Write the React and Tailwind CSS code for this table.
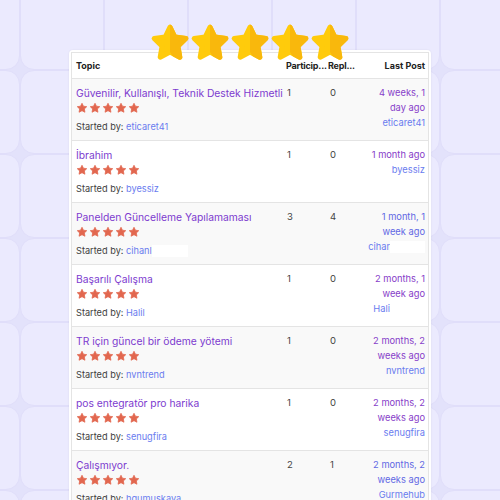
import React from "react";

const rows = [
  { title: "Güvenilir, Kullanışlı, Teknik Destek Hizmetli", by: "eticaret41", p: "1", r: "0", date: ["4 weeks, 1", "day ago"], dateBlue: false, last: "eticaret41" },
  { title: "İbrahim", titleRed: true, by: "byessiz", p: "1", r: "0", date: ["1 month ago"], dateBlue: false, last: "byessiz" },
  { title: "Panelden Güncelleme Yapılamaması", by: "cihanl", byRed: true, p: "3", r: "4", date: ["1 month, 1", "week ago"], dateBlue: true, last: "cihar", lastRed: true },
  { title: "Başarılı Çalışma", by: "Halil", byRed: true, p: "1", r: "0", date: ["2 months, 1", "week ago"], dateBlue: false, last: "Hali", lastRed: true },
  { title: "TR için güncel bir ödeme yötemi", by: "nvntrend", p: "1", r: "0", date: ["2 months, 2", "weeks ago"], dateBlue: false, last: "nvntrend" },
  { title: "pos entegratör pro harika", by: "senugfira", p: "1", r: "0", date: ["2 months, 2", "weeks ago"], dateBlue: false, last: "senugfira" },
  { title: "Çalışmıyor.", by: "hgumuskaya", p: "2", r: "1", date: ["2 months, 2", "weeks ago"], dateBlue: true, last: "Gurmehub" },
];

const STAR = "12,2.5 14.9,8.4 21.5,9.3 16.75,13.9 17.9,20.5 12,17.4 6.1,20.5 7.25,13.9 2.5,9.3 9.1,8.4";

function SmallStar() {
  return (
    <svg width="12" height="12" viewBox="0 0 24 24" className="block">
      <polygon points={STAR} fill="#e2674f" stroke="#e2674f" strokeWidth="1.5" strokeLinejoin="round" />
    </svg>
  );
}

function GoldStar({ id }) {
  return (
    <svg width="40" height="40" viewBox="0 0 24 24" className="block">
      <defs>
        <clipPath id={id}>
          <polygon points="12,0 24,0 24,24 16,24 12,17.4" />
        </clipPath>
      </defs>
      <polygon points={STAR} fill="#ffcb0b" stroke="#ffcb0b" strokeWidth="3" strokeLinejoin="round" />
      <polygon points={STAR} fill="#f9b80c" stroke="#f9b80c" strokeWidth="3" strokeLinejoin="round" clipPath={`url(#${id})`} />
    </svg>
  );
}

export default function App() {
  const cells = Array.from({ length: 56 });
  return (
    <div className="relative w-[500px] h-[500px] overflow-hidden bg-[#e3e2fb] font-['Inter',sans-serif]">
      <div className="absolute inset-0 overflow-hidden">
        <div className="grid grid-cols-[repeat(8,84px)] -ml-[64px] -mt-[14px]">
          {cells.map((_, i) => (
            <div key={i} className="w-[84px] h-[84px] rounded-[14px] border border-[#e0defa] bg-[#ebeafe]" />
          ))}
        </div>
      </div>

      <div className="relative ml-[69px] mt-[50px] w-[362px] bg-white rounded-[4px] p-[2px] shadow-[0_0_2px_rgba(0,0,0,0.08)]">
        <div className="border border-[#e4e4e4] border-b-0">
          <div className="grid grid-cols-[213px_43px_28px_1fr] h-[26px] items-center border-b border-[#e4e4e4] bg-white text-[9px] font-bold text-[#222]">
            <div className="pl-[4px]">Topic</div>
            <div className="pl-[1px] overflow-hidden whitespace-nowrap tracking-[-0.2px]">Particip...</div>
            <div className="overflow-hidden whitespace-nowrap tracking-[-0.2px]">Repl...</div>
            <div className="text-right pr-[3px]">Last Post</div>
          </div>
          {rows.map((row, i) => (
            <div
              key={i}
              className={`grid grid-cols-[213px_43px_28px_1fr] h-[62px] pt-[6px] border-b border-[#e4e4e4] ${i % 2 === 0 ? "bg-[#f9f9f9]" : "bg-white"}`}
            >
              <div className="pl-[4px] pt-[1px]">
                <div className="flex items-center whitespace-nowrap text-[10.3px] leading-[14px] text-[#7d3bcf]">
                  <span>{row.title}</span>
                  {row.titleRed && <span className="ml-[3px] inline-block w-[40px] h-[11px] bg-white" />}
                </div>
                <div className="mt-[2px] flex gap-[1px]">
                  {[0, 1, 2, 3, 4].map((s) => (
                    <SmallStar key={s} />
                  ))}
                </div>
                <div className="mt-[7px] flex items-center whitespace-nowrap text-[9.2px] leading-[12px] text-[#3d3d3d]">
                  <span>Started by:&nbsp;</span>
                  <span className="text-[#6a7cef]">{row.by}</span>
                  {row.byRed && <span className="inline-block w-[36px] h-[12px] bg-white" />}
                </div>
              </div>
              <div className="pl-[2px] pt-[1px] text-[9.5px] leading-[14px] text-[#444]">{row.p}</div>
              <div className="pl-[2px] pt-[1px] text-[9.5px] leading-[14px] text-[#444]">{row.r}</div>
              <div className="pr-[3px] text-right text-[9.3px]">
                {row.date.map((d, k) => (
                  <div key={k} className={`leading-[15px] ${row.dateBlue ? "text-[#6268e4]" : "text-[#8740c9]"}`}>
                    {d}
                  </div>
                ))}
                <div className="mt-[1px] flex justify-end items-center leading-[14px] text-[#6a7cef]">
                  <span>{row.last}</span>
                  {row.lastRed && <span className="inline-block w-[35px] h-[12px] bg-white" />}
                </div>
              </div>
            </div>
          ))}
        </div>
      </div>

      <div className="absolute left-[150px] top-[23px] flex">
        {[0, 1, 2, 3, 4].map((s) => (
          <GoldStar key={s} id={`gs${s}`} />
        ))}
      </div>
    </div>
  );
}
